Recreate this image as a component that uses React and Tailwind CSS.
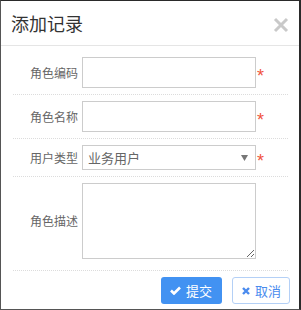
import { useState } from 'react';

const font = { fontFamily: '"Noto Sans CJK SC", "Noto Sans", sans-serif' };

function Row({ label, children, className }) {
   return (
      <div className={`flex items-center border-b border-dotted border-[#dcdcdc] ${className}`}>
         <label className="w-[65px] shrink-0 text-right text-[12px] leading-[16px] text-[#666]">{label}</label>
         <div className="ml-[4px] flex items-center">{children}</div>
      </div>
   );
}

function Star() {
   return (
      <span className="mt-[7px] ml-[1px] font-['Liberation_Sans',sans-serif] text-[18px] leading-[18px] text-[#f0533c]">*</span>
   );
}

export default function App() {
   const [type, setType] = useState('业务用户');

   return (
      <div
         className="flex h-[310px] w-[301px] flex-col border-t border-r-2 border-b border-l border-t-[#2a2a2a] border-r-[#2a2a2a] border-b-[#555] border-l-[#555] bg-white"
         style={font}
      >
         <div className="flex h-[45px] shrink-0 items-center justify-between border-b border-[#e5e5e5] pl-[10px] pr-[10px]">
            <h3 className="text-[18px] leading-[24px] text-[#333]">添加记录</h3>
            <svg width="16" height="16" viewBox="0 0 16 16" className="mt-[3px]">
               <path d="M2 2 L14 14 M14 2 L2 14" stroke="#c9c9c9" strokeWidth="3" />
            </svg>
         </div>

         <div className="ml-[12px] mr-[11px]">
            <Row label="角色编码" className="pt-[11px] pb-[6px]">
               <input className="h-[31px] w-[174px] border border-[#ccc] px-2 text-[13px] outline-none" />
               <Star />
            </Row>
            <Row label="角色名称" className="pt-[6px] pb-[6px]">
               <input className="h-[31px] w-[174px] border border-[#ccc] px-2 text-[13px] outline-none" />
               <Star />
            </Row>
            <Row label="用户类型" className="pt-[6px] pb-[6px]">
               <div className="relative flex h-[25px] w-[174px] items-center border border-[#ccc] pl-[5px] text-[13px] text-[#666]">
                  <span>{type}</span>
                  <svg width="7" height="6" viewBox="0 0 7 6" className="absolute right-[7px] top-[9px]">
                     <path d="M0 0 H7 L3.5 6 Z" fill="#777" />
                  </svg>
               </div>
               <Star />
            </Row>
            <Row label="角色描述" className="pt-[6px] pb-[11px]">
               <textarea className="h-[76px] w-[174px] border border-[#ccc] text-[13px] outline-none" />
            </Row>
         </div>

         <div className="flex justify-end gap-[10px] pt-[6px] pr-[9px]">
            <button
               type="button"
               onClick={() => setType('业务用户')}
               className="flex h-[27px] w-[61px] items-center rounded-[3px] bg-[#4292f2] pl-[9px] text-[13px] text-white"
            >
               <svg width="11" height="9" viewBox="0 0 11 9">
                  <path d="M1 4.5 L4 7.5 L10 1.5" stroke="#fff" strokeWidth="2.6" fill="none" />
               </svg>
               <span className="ml-[5px] leading-[16px]">提交</span>
            </button>
            <button
               type="button"
               className="flex h-[27px] w-[58px] items-center rounded-[3px] border border-[#b4d0f6] bg-white pl-[9px] text-[13px] text-[#4a8bee]"
            >
               <svg width="8" height="8" viewBox="0 0 8 8">
                  <path d="M1 1 L7 7 M7 1 L1 7" stroke="#4a8bee" strokeWidth="2.4" />
               </svg>
               <span className="ml-[5px] leading-[16px]">取消</span>
            </button>
         </div>
      </div>
   );
}
